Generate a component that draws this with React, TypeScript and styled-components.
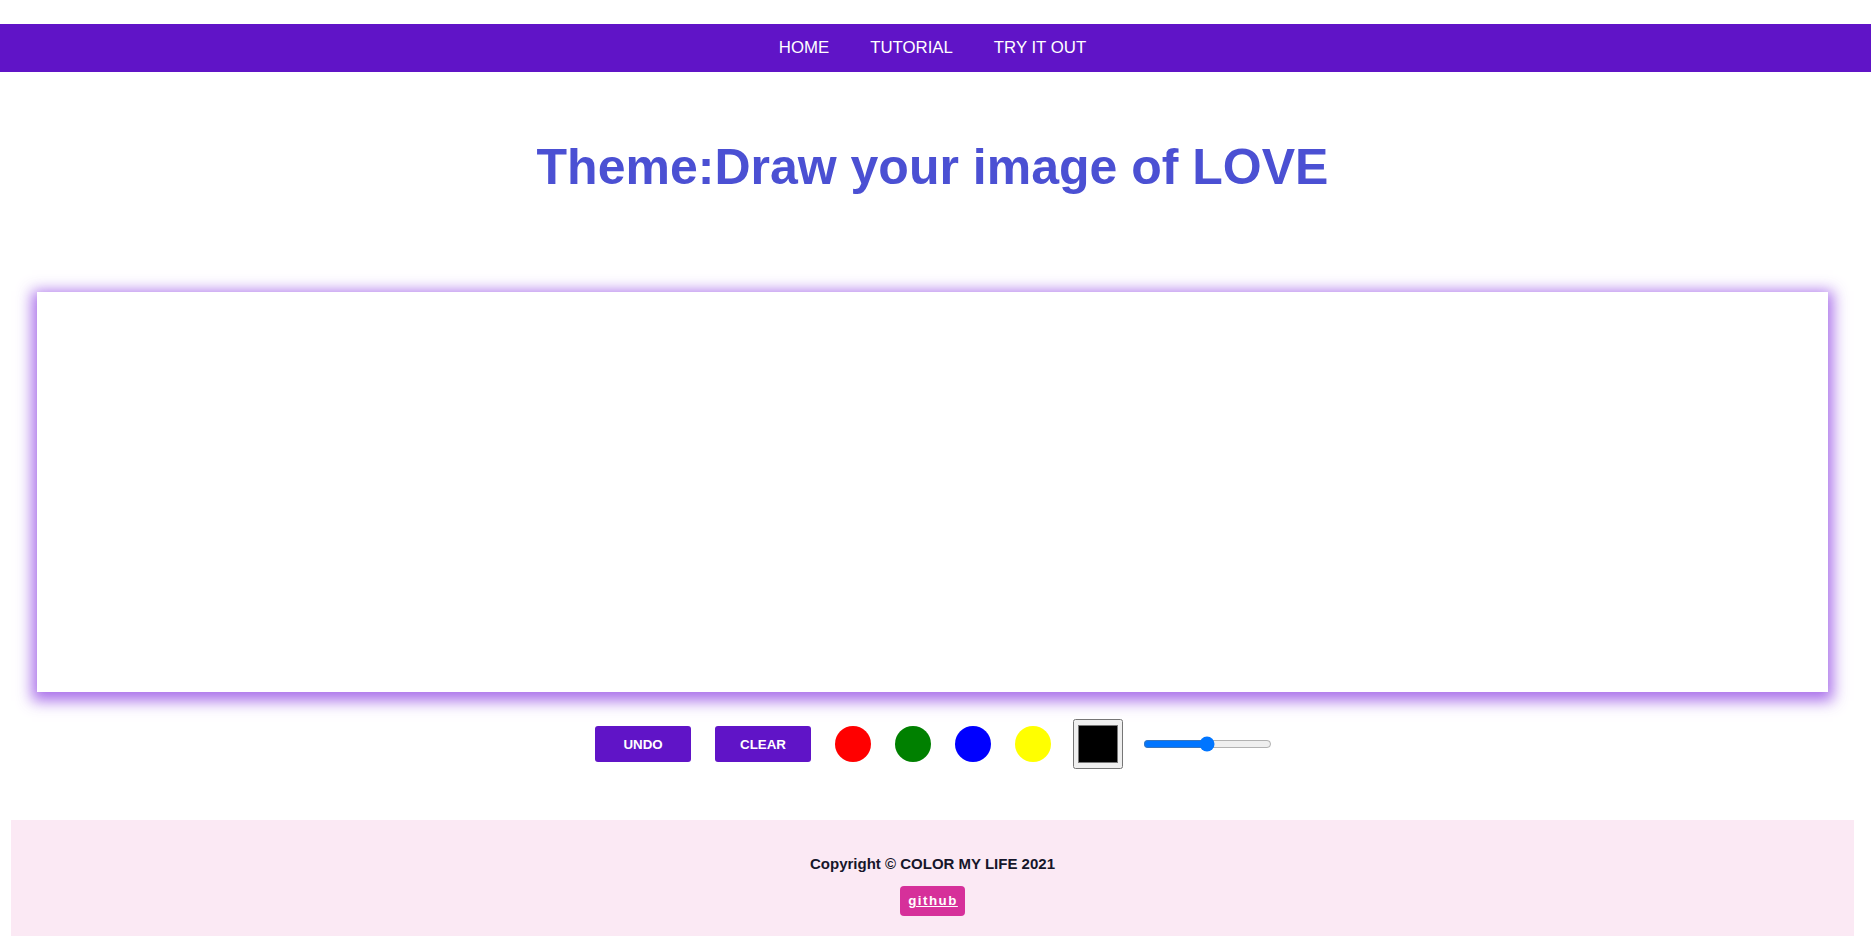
import styled, { createGlobalStyle } from 'styled-components';

const GlobalStyle = createGlobalStyle`
  body {
    margin: 0;
    background: #ffffff;
    font-family: "Liberation Sans", Arial, sans-serif;
  }
`;

const Nav = styled.nav`
  margin-top: 24px;
  height: 48px;
  background: #6014c7;
`;

const NavList = styled.ul`
  display: flex;
  justify-content: center;
  align-items: center;
  gap: 41px;
  height: 100%;
  margin: 0;
  padding: 0 6px 0 0;
  list-style: none;
`;

const NavLink = styled.a`
  color: #ffffff;
  font-size: 16.8px;
  text-decoration: none;
  cursor: pointer;
`;

const Content = styled.main`
  padding: 0 6px 0 0;
`;

const Title = styled.h1`
  margin: 66px 0 96px;
  text-align: center;
  font-size: 50px;
  font-weight: bold;
  color: #4b50d3;
`;

const Board = styled.canvas`
  display: block;
  width: calc(100% - 74px);
  height: 400px;
  margin: 0 auto;
  background: #ffffff;
  box-shadow: 0 4px 14px 5px rgba(155, 88, 230, 0.85);
`;

const Controls = styled.div`
  display: flex;
  justify-content: center;
  align-items: center;
  gap: 24px;
  margin: 27px 0 51px;
  padding-left: 4px;
`;

const ActionButton = styled.button`
  width: 96px;
  height: 36px;
  border: none;
  border-radius: 3px;
  background: #6014c7;
  color: #ffffff;
  font-family: "Liberation Sans", Arial, sans-serif;
  font-size: 13.33px;
  font-weight: bold;
  cursor: pointer;
`;

const Swatch = styled.button<{ $color: string }>`
  width: 36px;
  height: 36px;
  padding: 0;
  border: none;
  border-radius: 50%;
  background: ${p => p.$color};
  cursor: pointer;
`;

const ColorPicker = styled.input`
  width: 50px;
  height: 50px;
  margin: 0 0 0 -2px;
`;

const SizeSlider = styled.input`
  margin: 2px 2px 2px -4px;
`;

const Footer = styled.footer`
  margin: 0 11px;
  padding: 35px 0 30px;
  background: #fbe9f4;
  text-align: center;
`;

const Copyright = styled.p`
  margin: 0 0 14px;
  font-size: 15px;
  font-weight: bold;
  color: #16162a;
`;

const GithubLink = styled.a`
  display: inline-block;
  padding: 7px 7px 7px 8px;
  line-height: 16px;
  border-radius: 4px;
  background: #d6309a;
  color: #ffffff;
  font-size: 13.33px;
  font-weight: bold;
  letter-spacing: 1.5px;
  text-decoration: underline;
`;

const colors = ['red', 'green', 'blue', 'yellow'];

export default function App() {
  return (
    <>
      <GlobalStyle />
      <Nav>
        <NavList>
          <li><NavLink>HOME</NavLink></li>
          <li><NavLink>TUTORIAL</NavLink></li>
          <li><NavLink>TRY IT OUT</NavLink></li>
        </NavList>
      </Nav>
      <Content>
        <Title>Theme:Draw your image of LOVE</Title>
        <Board />
        <Controls>
          <ActionButton type='button'>UNDO</ActionButton>
          <ActionButton type='button'>CLEAR</ActionButton>
          {colors.map(c => (
            <Swatch key={c} type='button' $color={c} aria-label={c} />
          ))}
          <ColorPicker type='color' defaultValue='#000000' />
          <SizeSlider type='range' min={1} max={100} defaultValue={50} />
        </Controls>
        <Footer>
          <Copyright>Copyright © COLOR MY LIFE 2021</Copyright>
          <GithubLink>github</GithubLink>
        </Footer>
      </Content>
    </>
  );
}
